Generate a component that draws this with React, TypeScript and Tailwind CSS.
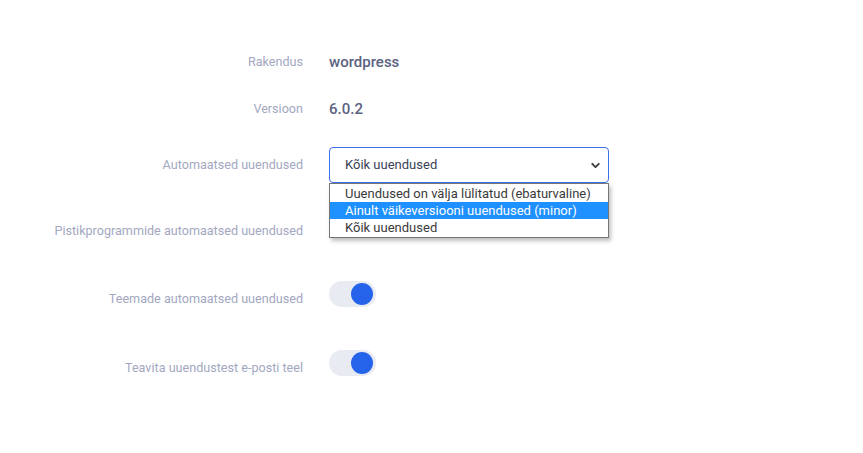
import { ChevronDown } from 'lucide-react';

function Toggle() {
    return (
        <div className="w-[47px] h-[26px] mb-[11px] rounded-full bg-[#e9ebf2] flex items-center justify-end px-[3px]">
            <div className="w-[22px] h-[22px] rounded-full bg-[#2563eb]" />
        </div>
    );
}

function Row({ label, children, h }: { label: string; children?: React.ReactNode; h: string }) {
    return (
        <div className={`flex items-center ${h}`}>
            <div className="w-[303px] shrink-0 text-right text-[12.6px] text-[#a3a8bf]">{label}</div>
            <div className="pl-[26px] flex items-center">{children}</div>
        </div>
    );
}

export default function App() {
    const options = [
        'Uuendused on välja lülitatud (ebaturvaline)',
        'Ainult väikeversiooni uuendused (minor)',
        'Kõik uuendused',
    ];

    return (
        <div className="w-[863px] h-[453px] bg-white pt-[39px]" style={{ fontFamily: 'Roboto, "Noto Sans", sans-serif' }}>
            <Row label="Rakendus" h="h-[47px]">
                <span className="text-[15px] font-medium text-[#5c6281]">wordpress</span>
            </Row>
            <Row label="Versioon" h="h-[47px]">
                <span className="text-[15px] font-medium text-[#5c6281]">6.0.2</span>
            </Row>
            <Row label="Automaatsed uuendused" h="h-[64px]">
                <div className="relative">
                    <div className="w-[280px] h-[36px] border border-[#3b72e8] rounded-[4px] flex items-center justify-between pl-[15px] pr-[6px] text-[13px] text-[#3a3f55]">
                        <span>Kõik uuendused</span>
                        <ChevronDown size={13} strokeWidth={3.5} className="text-[#3d3d3d]" />
                    </div>
                    {/* open native list */}
                    <div className="absolute left-0 top-[36px] w-[280px] border border-[#767676] bg-white shadow-[2px_3px_4px_rgba(0,0,0,0.25)] z-10 py-[1px]">
                        {options.map((o, i) => (
                            <div
                                key={o}
                                className={`h-[17px] leading-[17px] pl-[15px] text-[13px] ${i === 1 ? 'bg-[#1e90ff] text-white' : 'text-[#3a3a3a]'}`}
                            >
                                {o}
                            </div>
                        ))}
                    </div>
                </div>
            </Row>
            <Row label="Pistikprogrammide automaatsed uuendused" h="h-[68px]" />
            <Row label="Teemade automaatsed uuendused" h="h-[68px]">
                <Toggle />
            </Row>
            <Row label="Teavita uuendustest e-posti teel" h="h-[70px]">
                <Toggle />
            </Row>
        </div>
    );
}
